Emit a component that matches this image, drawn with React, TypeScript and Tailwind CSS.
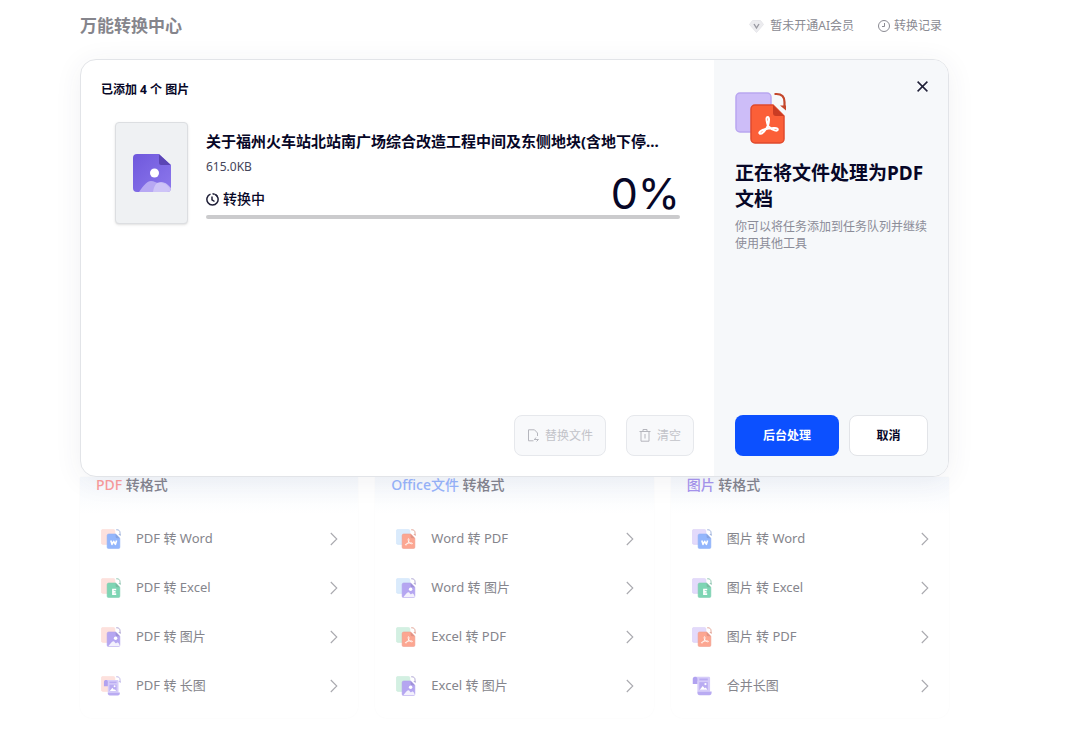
import React from 'react';

type Kind = 'pdf' | 'word' | 'excel' | 'image' | 'scroll';

const BACK: Record<Kind, { fill: string; stroke: string }> = {
  pdf: { fill: '#fdc9c2', stroke: '#fbbcb4' },
  word: { fill: '#bcdcfb', stroke: '#a9d0f8' },
  excel: { fill: '#b0e5cb', stroke: '#9fdcbe' },
  image: { fill: '#cdbdf8', stroke: '#b9a6f0' },
  scroll: { fill: '#cdbdf8', stroke: '#b9a6f0' },
};

const FRONT: Record<Kind, { fill: string; stroke: string; fold: string; arrow: string }> = {
  pdf: { fill: '#fb5f38', stroke: '#e04a2c', fold: '#c93c24', arrow: '#c4472b' },
  word: { fill: '#3b7bfb', stroke: '#3370ee', fold: '#2659c9', arrow: '#3a62b8' },
  excel: { fill: '#16b378', stroke: '#12a56d', fold: '#0b8455', arrow: '#1c8a60' },
  image: { fill: '#7a5fe6', stroke: '#6d52dc', fold: '#5238b8', arrow: '#5c48a8' },
  scroll: { fill: '#7a5fe6', stroke: '#6d52dc', fold: '#5238b8', arrow: '#7a6ad0' },
};

function Glyph({ kind }: { kind: Kind }) {
  if (kind === 'pdf')
    return (
      <path
        d="M33 34c-1-3-2.600-9-.4-9s1.400 5 .4 8.400c-1.600 4-6.200 9.400-8.200 8.200s3.200-4.800 9-5.200c4-.6 9-.9 9 1.200s-5 1.200-9.800-3.600z"
        fill="none"
        stroke="#fff"
        strokeWidth="2"
        strokeLinejoin="round"
      />
    );
  if (kind === 'word')
    return <path d="M25.500 30l3 10 4.500-8 4.500 8 3-10" fill="none" stroke="#fff" strokeWidth="4.200" strokeLinejoin="round" />;
  if (kind === 'excel')
    return <path d="M39.500 30H31v12h8.500M31 36h7" fill="none" stroke="#fff" strokeWidth="4.200" />;
  return (
    <g fill="#fff">
      <circle cx="38" cy="29" r="4.500" />
      <path d="M19 50c5-6 9-13 13-13s4 5 6 5 3-2 5-2 5 4 6 10z" opacity=".85" />
    </g>
  );
}

function Scroll() {
  return (
    <g>
      <path d="M6 2h38a3 3 0 0 1 3 3v35H14V14z" fill="#b5a3f5" />
      <path d="M2 8c0-8 12-8 12 0v13H2z" fill="#7257e4" />
      <path d="M14 40h37v3c0 4-2 7-6 7H20c-4 0-6-3-6-7z" fill="#8067e8" />
      <path d="M19 9h22" stroke="#8067e8" strokeWidth="5" />
      <path d="M19 16h22v20H19z" fill="#8067e8" />
      <circle cx="35" cy="21" r="3" fill="#fff" />
      <path d="M20 36l8-10 5 6 3-2 4 6z" fill="#fff" />
    </g>
  );
}

function ConvertIcon({ from, to, className }: { from: Kind; to: Kind; className: string }) {
  const back = BACK[from];
  const front = FRONT[to];
  if (from === 'scroll')
    return (
      <svg viewBox="0 0 52 52" className={className} aria-hidden="true">
        <Scroll />
      </svg>
    );
  return (
    <svg viewBox="0 0 52 52" className={className} aria-hidden="true">
      <rect x="1" y="1" width="35" height="39" rx="4" fill={back.fill} stroke={back.stroke} strokeWidth="1.500" />
      <path d="M39.500 2h2c5 0 8 3 8 8v5" fill="none" stroke={front.arrow} strokeWidth="2.200" />
      <path d="M45 13.500h6v5z" fill={front.arrow} />
      {to === 'scroll' ? (
        <g transform="translate(6 9) scale(.84)">
          <Scroll />
        </g>
      ) : (
        <>
          <path
            d="M20 13h18l11 11v23a4 4 0 0 1-4 4H20a4 4 0 0 1-4-4V17a4 4 0 0 1 4-4z"
            fill={front.fill}
            stroke={front.stroke}
            strokeWidth="1.500"
          />
          <path d="M38 13l11 11h-8a3 3 0 0 1-3-3z" fill={front.fold} />
          <Glyph kind={to} />
        </>
      )}
    </svg>
  );
}

function PictureFile() {
  return (
    <svg viewBox="0 0 38 39" className="w-[38px]" role="img" aria-label="图片">
      <defs>
        <linearGradient id="pic" x1="0" y1="0" x2="1" y2="1">
          <stop offset="0" stopColor="#6f58dc" />
          <stop offset="1" stopColor="#8c78ec" />
        </linearGradient>
        <clipPath id="sheet">
          <path d="M4 0h22l12 11v23a4 4 0 0 1-4 4H4a4 4 0 0 1-4-4V4a4 4 0 0 1 4-4z" />
        </clipPath>
      </defs>
      <g clipPath="url(#sheet)">
        <rect width="38" height="38" fill="url(#pic)" />
        <path d="M26 0l12 11H28a2 2 0 0 1-2-2z" fill="#5b45b4" />
        <path d="M6 38c5-7 8-11 12-11 3 0 5 2 8 2 5 0 9 1 12 9z" fill="#b7a8f3" />
        <path d="M20 38c1-6 3-10 8-10 5 0 8 4 10 6v4z" fill="#d3caf8" opacity=".8" />
      </g>
      <circle cx="21.500" cy="19" r="4.500" fill="#fff" />
    </svg>
  );
}

type Item = { label: string; from: Kind; to: Kind };
type Group = { accent: string; color: string; items: Item[] };

const GROUPS: Group[] = [
  {
    accent: 'PDF',
    color: 'text-[#fb9c9c]',
    items: [
      { label: 'PDF 转 Word', from: 'pdf', to: 'word' },
      { label: 'PDF 转 Excel', from: 'pdf', to: 'excel' },
      { label: 'PDF 转 图片', from: 'pdf', to: 'image' },
      { label: 'PDF 转 长图', from: 'pdf', to: 'scroll' },
    ],
  },
  {
    accent: 'Office文件',
    color: 'text-[#97b4fb]',
    items: [
      { label: 'Word 转 PDF', from: 'word', to: 'pdf' },
      { label: 'Word 转 图片', from: 'word', to: 'image' },
      { label: 'Excel 转 PDF', from: 'excel', to: 'pdf' },
      { label: 'Excel 转 图片', from: 'excel', to: 'image' },
    ],
  },
  {
    accent: '图片',
    color: 'text-[#a795ee]',
    items: [
      { label: '图片 转 Word', from: 'image', to: 'word' },
      { label: '图片 转 Excel', from: 'image', to: 'excel' },
      { label: '图片 转 PDF', from: 'image', to: 'pdf' },
      { label: '合并长图', from: 'scroll', to: 'scroll' },
    ],
  },
];

function GroupCard({ group }: { group: Group }) {
  return (
    <section className="rounded-b-xl bg-white pb-2 shadow-[0_0_2px_rgba(20,30,60,0.03)]">
      <h2 className="bg-linear-to-b from-[#f6f9fd] to-white px-4 pb-[21px] text-sm leading-4 font-medium text-[#84848f]">
        <span className={group.color}>{group.accent}</span> 转格式
      </h2>
      <ul>
        {group.items.map((item) => (
          <li key={item.label}>
            <a href="#" className="flex h-[49px] items-center pr-5 pl-[21px] text-[13px] text-[#85858c]">
              <ConvertIcon from={item.from} to={item.to} className="w-5 opacity-55" />
              <span className="ml-[15px] flex-1">{item.label}</span>
              <svg viewBox="0 0 8 14" className="h-3.5 w-2" fill="none" stroke="#a9a9af" strokeWidth="1.100" aria-hidden="true">
                <path d="M.8 1l6 6-6 6" />
              </svg>
            </a>
          </li>
        ))}
      </ul>
    </section>
  );
}

function TopBar() {
  return (
    <header className="flex h-[59px] items-start justify-between pt-3.5">
      <h1 className="text-[17px] leading-6 font-bold text-[#85858c]">万能转换中心</h1>
      <nav className="flex items-center gap-6 pr-[7px] text-xs leading-6 text-[#8a8a92]">
        <a href="#" className="flex items-center gap-1.5">
          <svg viewBox="0 0 15 13" className="w-[15px]" aria-hidden="true">
            <path d="M3.500.5h8L14.500 4.500 7.500 12.500.5 4.500z" fill="#ececef" stroke="#e6e6ea" strokeLinejoin="round" />
            <path d="M5 4l2.500 4L10 4" fill="none" stroke="#9a9aa2" strokeWidth="1.400" />
          </svg>
          暂未开通AI会员
        </a>
        <a href="#" className="flex items-center gap-1">
          <svg viewBox="0 0 12 12" className="w-3" fill="none" stroke="#8a8a92" aria-hidden="true">
            <circle cx="6" cy="6" r="5.500" />
            <path d="M6.500 3v3.500H4" />
          </svg>
          转换记录
        </a>
      </nav>
    </header>
  );
}

function TaskDialog() {
  return (
    <div
      role="dialog"
      aria-label="正在将文件处理为PDF文档"
      className="relative z-10 flex min-h-[418px] overflow-hidden rounded-2xl border border-[#e2e4e8] bg-white text-[#070727] shadow-[0_4px_28px_rgba(50,60,80,0.07)]"
    >
      <div className="flex min-w-0 flex-1 flex-col pb-5">
        <h2 className="px-5 pt-5 text-xs leading-5 font-bold">已添加 4 个 图片</h2>
        <div className="mt-[22px] flex gap-[18px] pr-[34px] pl-[34px]">
          <div className="flex h-[102px] w-[73px] shrink-0 items-center justify-center rounded border border-[#dcdee1] bg-[#eff1f3] shadow-sm">
            <PictureFile />
          </div>
          <div className="min-w-0 flex-1 pt-[7px]">
            <p className="text-[15px] leading-6 font-bold">关于福州火车站北站南广场综合改造工程中间及东侧地块(含地下停...</p>
            <div className="flex justify-between">
              <div>
                <p className="pt-1 text-xs leading-5 text-[#45455a]">615.0KB</p>
                <p className="mt-3 flex items-center gap-1 text-sm leading-5 font-medium">
                  <svg viewBox="0 0 13 13" className="w-[13px]" fill="none" stroke="#202038" strokeWidth="1.500" aria-hidden="true">
                    <path d="M8.500 1.100a5.600 5.600 0 1 1-4 0" />
                    <path d="M6.500.8a5.600 5.600 0 0 1 4.800 2.900" strokeDasharray="2 1.500" />
                    <path d="M6 3.500v3.300l2.500 1.700" />
                  </svg>
                  转换中
                </p>
              </div>
              <p className="self-end font-[Inter,sans-serif] text-[43px] leading-8 font-normal">0%</p>
            </div>
            <div role="progressbar" aria-label="转换中" aria-valuenow={0} className="mt-1.5 h-1 rounded-full bg-[#cbcbcd]" />
          </div>
        </div>
        <div className="mt-auto flex justify-end gap-5 pr-5 text-xs text-[#c2c3c9]">
          <button disabled className="flex h-[41px] w-[92px] items-center justify-center gap-1.5 rounded-lg border border-[#e6e8ec] bg-[#f8f9fb]">
            <svg viewBox="0 0 12 13" className="w-3" fill="none" stroke="#b5b6bd" aria-hidden="true">
              <path d="M10.500 7V4L7.500.8H1.500v11h5" />
              <path d="M7 10.500h4.500L9.500 12.500M7.500 10.500L9 8.500" />
            </svg>
            替换文件
          </button>
          <button disabled className="flex h-[41px] w-[68px] items-center justify-center gap-1.5 rounded-lg border border-[#e6e8ec] bg-[#f8f9fb]">
            <svg viewBox="0 0 12 13" className="w-3" fill="none" stroke="#b5b6bd" aria-hidden="true">
              <path d="M.5 2.500h11M4 2.500v-2h4v2M2 2.500v9.700h8V2.500M6 5v4.500" />
            </svg>
            清空
          </button>
        </div>
      </div>

      <aside className="flex w-[234px] shrink-0 flex-col bg-[#f6f8fa] pt-3.5 pr-5 pb-5 pl-[21px]">
        <div className="flex items-start justify-between">
          <ConvertIcon from="image" to="pdf" className="mt-[18px] w-[52px]" />
          <button aria-label="关闭" className="flex h-6 w-3 items-center justify-center">
            <svg viewBox="0 0 11 11" className="w-[11px] shrink-0" stroke="#202038" strokeWidth="1.500" aria-hidden="true">
              <path d="M.6.6l9.800 9.800M10.400.6L.6 10.400" />
            </svg>
          </button>
        </div>
        <h2 className="mt-4 text-[19px] leading-[26px] font-bold">正在将文件处理为PDF文档</h2>
        <p className="mt-1.5 text-xs leading-[17px] text-[#8b8c98]">你可以将任务添加到任务队列并继续使用其他工具</p>
        <div className="mt-auto flex gap-2.5 text-xs font-bold">
          <button className="h-[41px] w-[104px] rounded-lg bg-[#0c50ff] text-white">后台处理</button>
          <button className="h-[41px] flex-1 rounded-lg border border-[#e2e4e8] bg-white">取消</button>
        </div>
      </aside>
    </div>
  );
}

export default function App() {
  return (
    <main className="min-h-screen bg-white pr-[131px] pb-4 pl-20 font-['Noto_Sans','Noto_Sans_CJK_SC',sans-serif]">
      <TopBar />
      <TaskDialog />
      <div className="grid grid-cols-3 gap-[17px]">
        {GROUPS.map((group) => (
          <GroupCard key={group.accent} group={group} />
        ))}
      </div>
    </main>
  );
}
